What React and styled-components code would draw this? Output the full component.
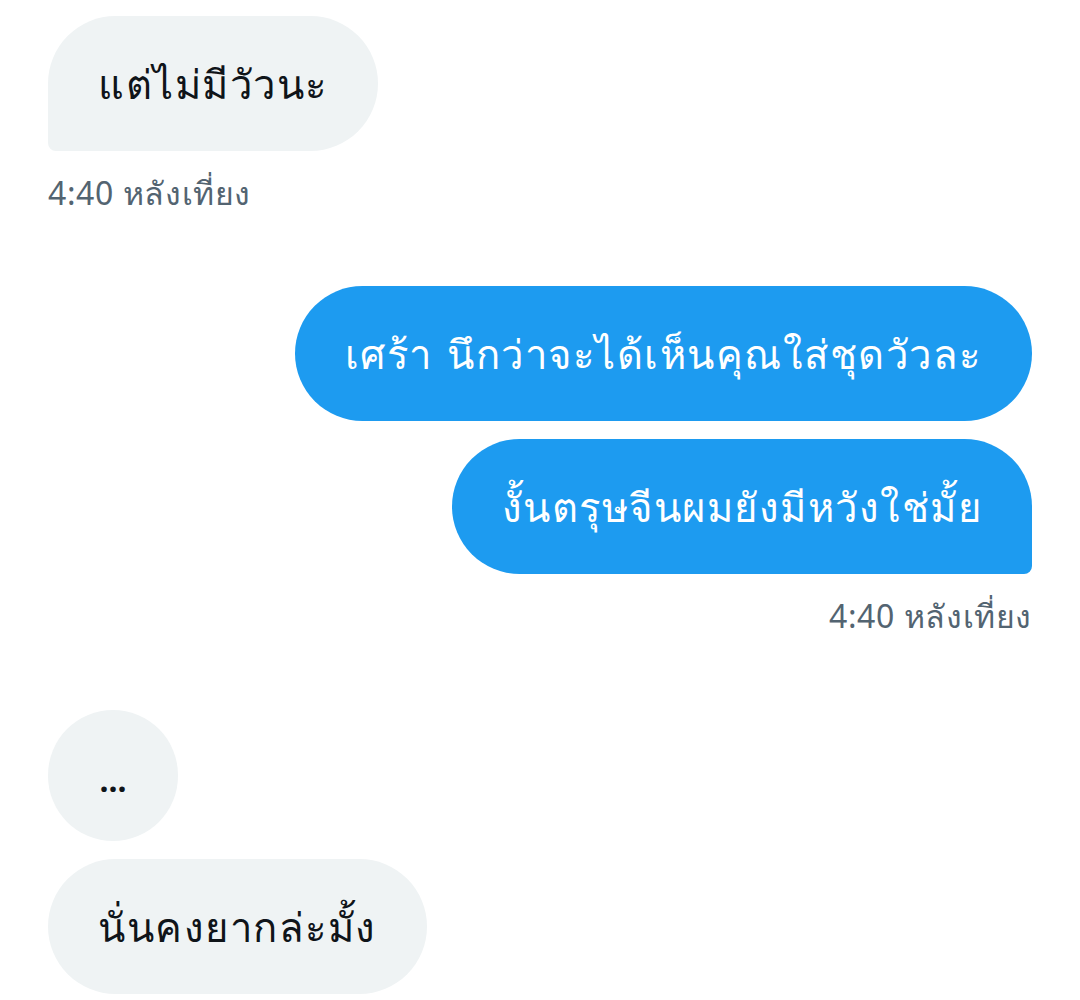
import React from 'react';
import styled, { createGlobalStyle } from 'styled-components';

const GlobalStyle = createGlobalStyle`
	html, body {
		margin: 0;
		padding: 0;
		background: #ffffff;
	}
	body {
		font-family: "Noto Sans", "Liberation Sans", sans-serif;
	}
`;

const Thread = styled.div`
	display: flex;
	flex-direction: column;
	padding: 16px 48px 0 48px;
	width: 1080px;
	box-sizing: border-box;
`;

const Group = styled.div`
	display: flex;
	flex-direction: column;
	align-items: ${(p) => (p.$sent ? 'flex-end' : 'flex-start')};
	gap: 18px;
	margin-top: ${(p) => p.$top || 0}px;
`;

const Bubble = styled.div`
	box-sizing: border-box;
	height: 135px;
	display: flex;
	align-items: center;
	padding: 0 50px;
	font-size: 40px;
	letter-spacing: 1.5px;
	word-spacing: 3px;
	line-height: 50px;
	white-space: nowrap;
	border-radius: 68px;
	background: ${(p) => (p.$sent ? '#1d9bf0' : '#eff3f4')};
	color: ${(p) => (p.$sent ? '#ffffff' : '#0f1419')};
	${(p) => p.$tail && (p.$sent ? 'border-bottom-right-radius: 8px;' : 'border-bottom-left-radius: 8px;')}
`;

const Dots = styled(Bubble)`
	width: 130px;
	height: 131px;
	padding: 8px 0 0 0;
	justify-content: center;
	font-size: 32px;
	font-weight: 700;
	letter-spacing: 0;
`;

const Time = styled.div`
	font-size: 32px;
	letter-spacing: 0.6px;
	line-height: 40px;
	color: #536471;
	margin-top: 4px;
`;

const messages = [
	{ sent: false, top: 0, items: [{ text: 'แต่ไม่มีวัวนะ', tail: true }], time: '4:40 หลังเที่ยง' },
	{ sent: true, top: 73, items: [{ text: 'เศร้า นึกว่าจะได้เห็นคุณใส่ชุดวัวละ' }, { text: 'งั้นตรุษจีนผมยังมีหวังใช่มั้ย', tail: true }], time: '4:40 หลังเที่ยง' },
	{ sent: false, top: 74, items: [{ text: '...', dots: true }, { text: 'นั่นคงยากล่ะมั้ง' }] },
];

export default function App() {
	return (
		<>
			<GlobalStyle />
			<Thread>
				{messages.map((group, i) => (
					<Group key={i} $sent={group.sent} $top={group.top}>
						{group.items.map((m, j) =>
							m.dots ? (
								<Dots key={j}>{m.text}</Dots>
							) : (
								<Bubble key={j} $sent={group.sent} $tail={m.tail}>
									{m.text}
								</Bubble>
							)
						)}
						{group.time && <Time>{group.time}</Time>}
					</Group>
				))}
			</Thread>
		</>
	);
}
